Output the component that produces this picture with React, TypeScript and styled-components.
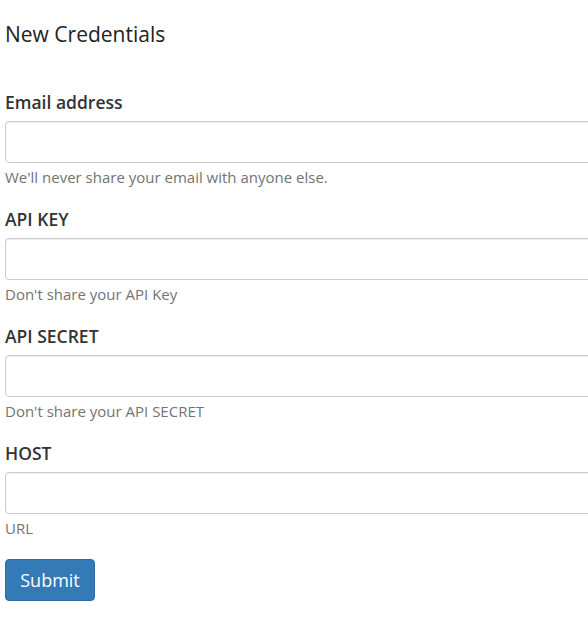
import React from 'react';
import styled, { createGlobalStyle } from 'styled-components';

const GlobalStyle = createGlobalStyle`
  html, body {
    margin: 0;
    padding: 0;
    overflow: hidden;
    background: #fff;
  }
  body {
    font-family: "Open Sans", "Liberation Sans", sans-serif;
    color: #333;
  }
  * {
    box-sizing: border-box;
  }
`;

const Page = styled.div`
  padding: 20px 0 0 5px;
  width: 720px;
`;

const Title = styled.h3`
  font-size: 21px;
  font-weight: 400;
  margin: 0 0 42px;
  line-height: 28px;
  color: #222;
`;

const Form = styled.form`
  display: flex;
  flex-direction: column;
`;

const Group = styled.div`
  margin-bottom: 20.5px;
`;

const Label = styled.label`
  display: block;
  font-size: 17.5px;
  font-weight: 600;
  line-height: 24px;
  margin-bottom: 7px;
  color: #333;
`;

const Input = styled.input`
  display: block;
  width: 100%;
  height: 42px;
  padding: 6px 12px;
  font-size: 15px;
  font-family: inherit;
  border: 1px solid #ccc;
  border-radius: 4px;
  box-shadow: inset 0 1px 1px rgba(0, 0, 0, 0.075);
  background: #fff;
`;

const Help = styled.small`
  display: block;
  margin-top: 3.5px;
  font-size: 15px;
  line-height: 20px;
  color: #737373;
`;

const SubmitButton = styled.button`
  align-self: flex-start;
  margin-top: 1px;
  width: 90px;
  height: 42px;
  font-family: inherit;
  font-size: 18px;
  color: #fff;
  background: #337ab7;
  border: 1px solid #2e6da4;
  border-radius: 4px;
  cursor: pointer;
`;

const fields = [
  { label: 'Email address', type: 'email', help: "We'll never share your email with anyone else." },
  { label: 'API KEY', type: 'text', help: "Don't share your API Key" },
  { label: 'API SECRET', type: 'text', help: "Don't share your API SECRET" },
  { label: 'HOST', type: 'text', help: 'URL' },
];

const App: React.FC = () => {
  return (
    <>
      <GlobalStyle />
      <Page>
        <Title>New Credentials</Title>
        <Form onSubmit={(e) => e.preventDefault()}>
          {fields.map((field) => (
            <Group key={field.label}>
              <Label>{field.label}</Label>
              <Input type={field.type} />
              <Help>{field.help}</Help>
            </Group>
          ))}
          <SubmitButton type="submit">Submit</SubmitButton>
        </Form>
      </Page>
    </>
  );
};

export default App;
